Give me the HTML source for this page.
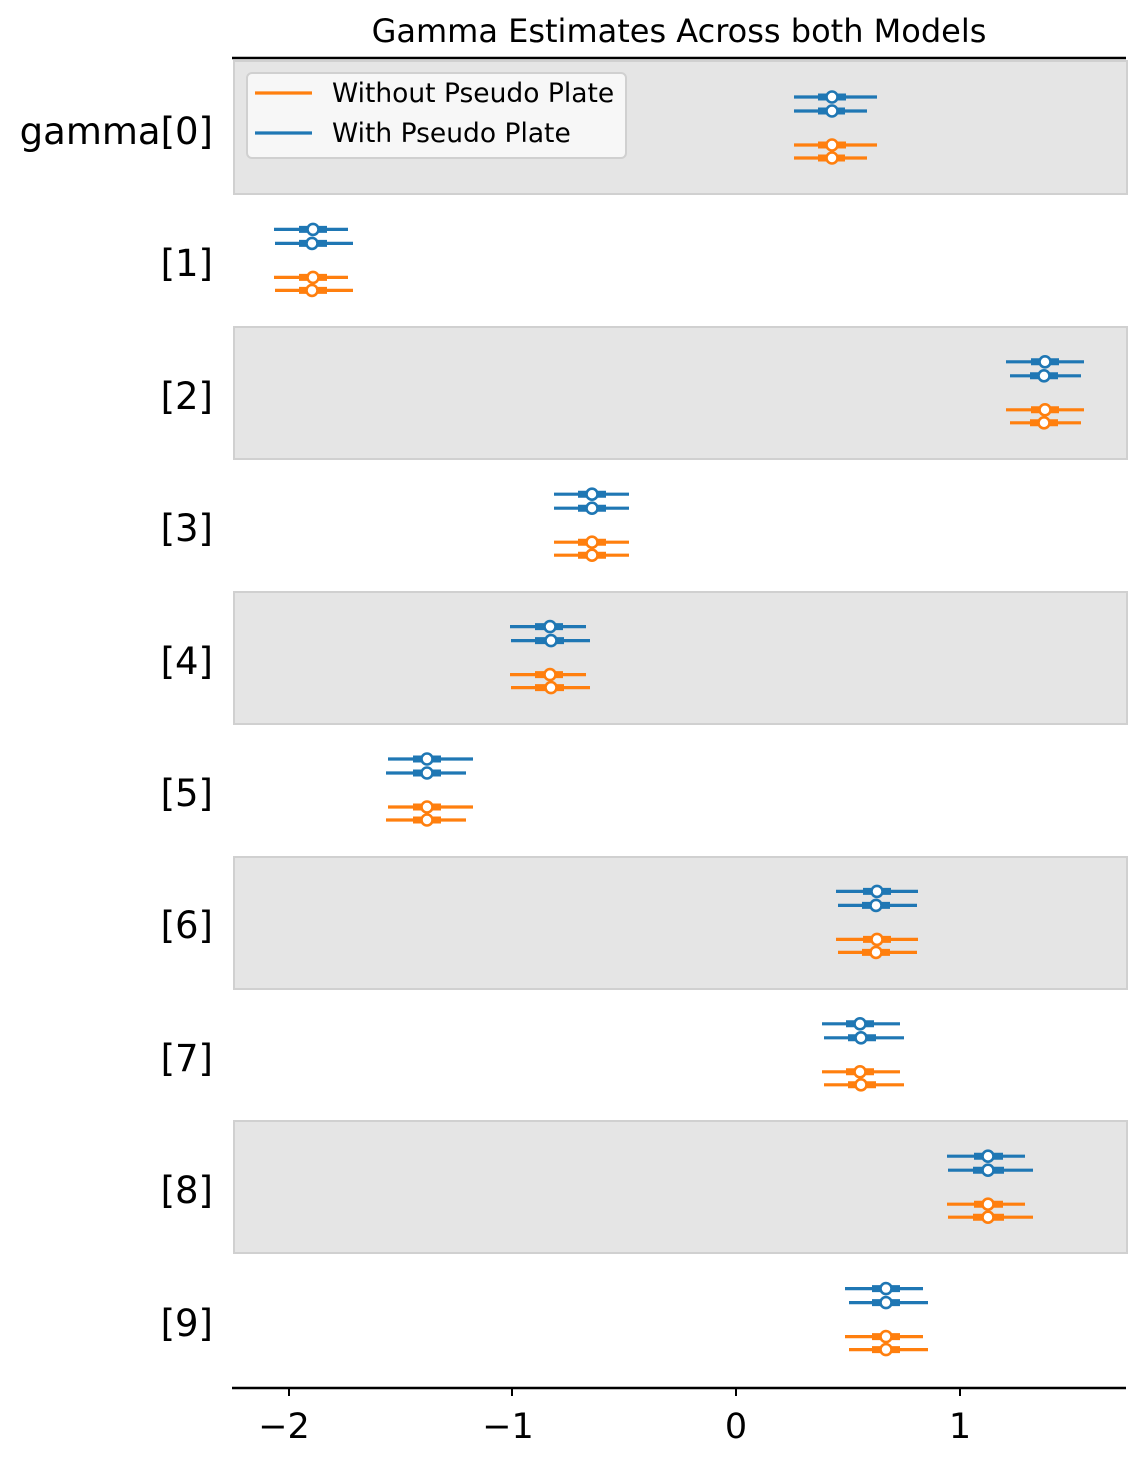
<!DOCTYPE html>
<html><head><meta charset="utf-8"><style>
html,body{margin:0;padding:0;background:#fff;}
svg{display:block;}
text{font-family:"DejaVu Sans","Liberation Sans",sans-serif;fill:#000;}
.b line,.b circle{stroke:#1f77b4;}
.o line,.o circle{stroke:#ff7f0e;}
.t{stroke-width:3.2;}
.k{stroke-width:7;}
circle{fill:#fff;stroke-width:2.6;}
</style></head><body>
<svg width="1144" height="1464" viewBox="0 0 1144 1464" xmlns="http://www.w3.org/2000/svg">
<g fill="#e5e5e5" stroke="#d0d0d0" stroke-width="2">
<rect x="234" y="61" width="893" height="133"/>
<rect x="234" y="327" width="893" height="132"/>
<rect x="234" y="592" width="893" height="132"/>
<rect x="234" y="857" width="893" height="132"/>
<rect x="234" y="1121" width="893" height="132"/>
</g>
<line x1="232" y1="58" x2="1126" y2="58" stroke="#000" stroke-width="2.5"/>
<line x1="232" y1="1388" x2="1126" y2="1388" stroke="#000" stroke-width="2.5"/>
<g stroke="#000" stroke-width="2">
<line x1="289" y1="1388" x2="289" y2="1396"/>
<line x1="512" y1="1388" x2="512" y2="1396"/>
<line x1="736" y1="1388" x2="736" y2="1396"/>
<line x1="960" y1="1388" x2="960" y2="1396"/>
</g>
<g font-size="35" text-anchor="middle">
<text x="284" y="1438">−2</text>
<text x="508" y="1438">−1</text>
<text x="736" y="1438">0</text>
<text x="960" y="1438">1</text>
</g>
<text x="679" y="42" font-size="32" text-anchor="middle">Gamma Estimates Across both Models</text>
<g font-size="37" text-anchor="end">
<text x="213" y="144">gamma[0]</text>
<text x="213" y="276">[1]</text>
<text x="213" y="409">[2]</text>
<text x="213" y="541">[3]</text>
<text x="213" y="674">[4]</text>
<text x="213" y="806">[5]</text>
<text x="213" y="938">[6]</text>
<text x="213" y="1071">[7]</text>
<text x="213" y="1203">[8]</text>
<text x="213" y="1336">[9]</text>
</g>

<g transform="translate(0,131)">
<g class="b"><line class="t" x1="794" y1="-34" x2="877" y2="-34"/><line class="k" x1="818" y1="-34" x2="846" y2="-34"/><circle cx="832" cy="-34" r="5.5"/>
<line class="t" x1="794" y1="-20" x2="867" y2="-20"/><line class="k" x1="818" y1="-20" x2="845" y2="-20"/><circle cx="832" cy="-20" r="5.5"/></g>
<g class="o"><line class="t" x1="794" y1="14" x2="877" y2="14"/><line class="k" x1="818" y1="14" x2="846" y2="14"/><circle cx="832" cy="14" r="5.5"/>
<line class="t" x1="794" y1="27" x2="867" y2="27"/><line class="k" x1="818" y1="27" x2="845" y2="27"/><circle cx="832" cy="27" r="5.5"/></g>
</g>
<g transform="translate(0,263.4)">
<g class="b"><line class="t" x1="274" y1="-34" x2="348" y2="-34"/><line class="k" x1="299" y1="-34" x2="327" y2="-34"/><circle cx="313" cy="-34" r="5.5"/>
<line class="t" x1="275" y1="-20" x2="353" y2="-20"/><line class="k" x1="299" y1="-20" x2="327" y2="-20"/><circle cx="312" cy="-20" r="5.5"/></g>
<g class="o"><line class="t" x1="274" y1="14" x2="348" y2="14"/><line class="k" x1="299" y1="14" x2="327" y2="14"/><circle cx="313" cy="14" r="5.5"/>
<line class="t" x1="275" y1="27" x2="353" y2="27"/><line class="k" x1="299" y1="27" x2="327" y2="27"/><circle cx="312" cy="27" r="5.5"/></g>
</g>
<g transform="translate(0,395.8)">
<g class="b"><line class="t" x1="1006" y1="-34" x2="1084" y2="-34"/><line class="k" x1="1031" y1="-34" x2="1059" y2="-34"/><circle cx="1045" cy="-34" r="5.5"/>
<line class="t" x1="1010" y1="-20" x2="1081" y2="-20"/><line class="k" x1="1030" y1="-20" x2="1058" y2="-20"/><circle cx="1044" cy="-20" r="5.5"/></g>
<g class="o"><line class="t" x1="1006" y1="14" x2="1084" y2="14"/><line class="k" x1="1031" y1="14" x2="1059" y2="14"/><circle cx="1045" cy="14" r="5.5"/>
<line class="t" x1="1010" y1="27" x2="1081" y2="27"/><line class="k" x1="1030" y1="27" x2="1058" y2="27"/><circle cx="1044" cy="27" r="5.5"/></g>
</g>
<g transform="translate(0,528.2)">
<g class="b"><line class="t" x1="554" y1="-34" x2="629" y2="-34"/><line class="k" x1="578" y1="-34" x2="606" y2="-34"/><circle cx="592" cy="-34" r="5.5"/>
<line class="t" x1="554" y1="-20" x2="629" y2="-20"/><line class="k" x1="578" y1="-20" x2="606" y2="-20"/><circle cx="592" cy="-20" r="5.5"/></g>
<g class="o"><line class="t" x1="554" y1="14" x2="629" y2="14"/><line class="k" x1="578" y1="14" x2="606" y2="14"/><circle cx="592" cy="14" r="5.5"/>
<line class="t" x1="554" y1="27" x2="629" y2="27"/><line class="k" x1="578" y1="27" x2="606" y2="27"/><circle cx="592" cy="27" r="5.5"/></g>
</g>
<g transform="translate(0,660.6)">
<g class="b"><line class="t" x1="510" y1="-34" x2="586" y2="-34"/><line class="k" x1="535" y1="-34" x2="563" y2="-34"/><circle cx="550" cy="-34" r="5.5"/>
<line class="t" x1="511" y1="-20" x2="590" y2="-20"/><line class="k" x1="535" y1="-20" x2="564" y2="-20"/><circle cx="551" cy="-20" r="5.5"/></g>
<g class="o"><line class="t" x1="510" y1="14" x2="586" y2="14"/><line class="k" x1="535" y1="14" x2="563" y2="14"/><circle cx="550" cy="14" r="5.5"/>
<line class="t" x1="511" y1="27" x2="590" y2="27"/><line class="k" x1="535" y1="27" x2="564" y2="27"/><circle cx="551" cy="27" r="5.5"/></g>
</g>
<g transform="translate(0,793)">
<g class="b"><line class="t" x1="388" y1="-34" x2="473" y2="-34"/><line class="k" x1="413" y1="-34" x2="441" y2="-34"/><circle cx="427" cy="-34" r="5.5"/>
<line class="t" x1="386" y1="-20" x2="466" y2="-20"/><line class="k" x1="413" y1="-20" x2="441" y2="-20"/><circle cx="427" cy="-20" r="5.5"/></g>
<g class="o"><line class="t" x1="388" y1="14" x2="473" y2="14"/><line class="k" x1="413" y1="14" x2="441" y2="14"/><circle cx="427" cy="14" r="5.5"/>
<line class="t" x1="386" y1="27" x2="466" y2="27"/><line class="k" x1="413" y1="27" x2="441" y2="27"/><circle cx="427" cy="27" r="5.5"/></g>
</g>
<g transform="translate(0,925.4)">
<g class="b"><line class="t" x1="836" y1="-34" x2="918" y2="-34"/><line class="k" x1="863" y1="-34" x2="891" y2="-34"/><circle cx="877" cy="-34" r="5.5"/>
<line class="t" x1="838" y1="-20" x2="917" y2="-20"/><line class="k" x1="862" y1="-20" x2="890" y2="-20"/><circle cx="876" cy="-20" r="5.5"/></g>
<g class="o"><line class="t" x1="836" y1="14" x2="918" y2="14"/><line class="k" x1="863" y1="14" x2="891" y2="14"/><circle cx="877" cy="14" r="5.5"/>
<line class="t" x1="838" y1="27" x2="917" y2="27"/><line class="k" x1="862" y1="27" x2="890" y2="27"/><circle cx="876" cy="27" r="5.5"/></g>
</g>
<g transform="translate(0,1057.8)">
<g class="b"><line class="t" x1="822" y1="-34" x2="900" y2="-34"/><line class="k" x1="846" y1="-34" x2="874" y2="-34"/><circle cx="860" cy="-34" r="5.5"/>
<line class="t" x1="824" y1="-20" x2="904" y2="-20"/><line class="k" x1="848" y1="-20" x2="876" y2="-20"/><circle cx="861" cy="-20" r="5.5"/></g>
<g class="o"><line class="t" x1="822" y1="14" x2="900" y2="14"/><line class="k" x1="846" y1="14" x2="874" y2="14"/><circle cx="860" cy="14" r="5.5"/>
<line class="t" x1="824" y1="27" x2="904" y2="27"/><line class="k" x1="848" y1="27" x2="876" y2="27"/><circle cx="861" cy="27" r="5.5"/></g>
</g>
<g transform="translate(0,1190.2)">
<g class="b"><line class="t" x1="947" y1="-34" x2="1025" y2="-34"/><line class="k" x1="974" y1="-34" x2="1003" y2="-34"/><circle cx="988" cy="-34" r="5.5"/>
<line class="t" x1="948" y1="-20" x2="1033" y2="-20"/><line class="k" x1="973" y1="-20" x2="1004" y2="-20"/><circle cx="988" cy="-20" r="5.5"/></g>
<g class="o"><line class="t" x1="947" y1="14" x2="1025" y2="14"/><line class="k" x1="974" y1="14" x2="1003" y2="14"/><circle cx="988" cy="14" r="5.5"/>
<line class="t" x1="948" y1="27" x2="1033" y2="27"/><line class="k" x1="973" y1="27" x2="1004" y2="27"/><circle cx="988" cy="27" r="5.5"/></g>
</g>
<g transform="translate(0,1322.6)">
<g class="b"><line class="t" x1="845" y1="-34" x2="923" y2="-34"/><line class="k" x1="872" y1="-34" x2="900" y2="-34"/><circle cx="886" cy="-34" r="5.5"/>
<line class="t" x1="849" y1="-20" x2="928" y2="-20"/><line class="k" x1="872" y1="-20" x2="900" y2="-20"/><circle cx="886" cy="-20" r="5.5"/></g>
<g class="o"><line class="t" x1="845" y1="14" x2="923" y2="14"/><line class="k" x1="872" y1="14" x2="900" y2="14"/><circle cx="886" cy="14" r="5.5"/>
<line class="t" x1="849" y1="27" x2="928" y2="27"/><line class="k" x1="872" y1="27" x2="900" y2="27"/><circle cx="886" cy="27" r="5.5"/></g>
</g>

<rect x="247" y="73" width="379" height="85" rx="5" fill="#f7f7f7" stroke="#d0d0d0" stroke-width="2"/>
<line x1="255" y1="93" x2="312" y2="93" stroke="#ff7f0e" stroke-width="3.2"/>
<line x1="255" y1="133" x2="312" y2="133" stroke="#1f77b4" stroke-width="3.2"/>
<text x="332" y="102" font-size="26.5">Without Pseudo Plate</text>
<text x="332" y="142" font-size="26.5">With Pseudo Plate</text>
</svg>
</body></html>
